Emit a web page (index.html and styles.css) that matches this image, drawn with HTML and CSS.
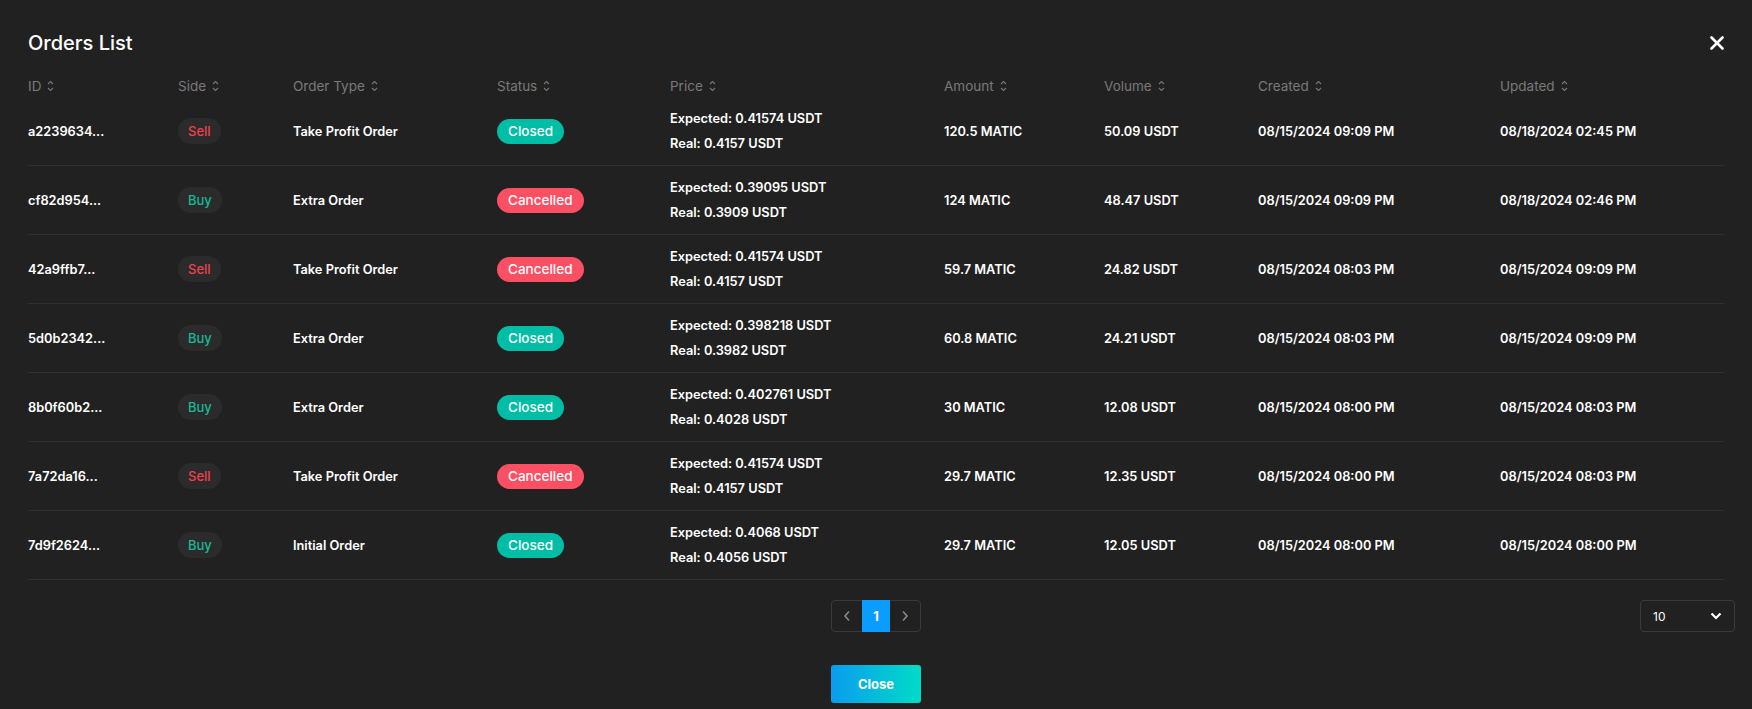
FILE: index.html
```html
<!DOCTYPE html>
<html lang="en">
<head>
  <meta charset="UTF-8" />
  <meta name="viewport" content="width=device-width, initial-scale=1.0"/>
  <title>Orders List</title>
  <link rel="stylesheet" href="styles.css">
</head>
<body>
  <div class="modal">
    <div class="modal-head">
      <h2>Orders List</h2>
      <button class="x-btn" aria-label="Close">
        <svg width="14" height="14" viewBox="0 0 14 14"><path d="M1.5 1.5 L12.5 12.5 M12.5 1.5 L1.5 12.5" stroke="#fff" stroke-width="2.6" stroke-linecap="round"/></svg>
      </button>
    </div>

    <div class="grid header-row">
      <span>ID <i class="sort"></i></span>
      <span>Side <i class="sort"></i></span>
      <span>Order Type <i class="sort"></i></span>
      <span>Status <i class="sort"></i></span>
      <span>Price <i class="sort"></i></span>
      <span>Amount <i class="sort"></i></span>
      <span>Volume <i class="sort"></i></span>
      <span>Created <i class="sort"></i></span>
      <span>Updated <i class="sort"></i></span>
    </div>

    <div id="rows"></div>

    <div class="footer">
      <div></div>
      <div class="pager">
        <span class="pg-arrow"><svg width="8" height="12" viewBox="0 0 8 12"><path d="M6 1.5 L2 6 L6 10.5" fill="none" stroke="#8a8a8a" stroke-width="1.6"/></svg></span>
        <span class="pg-num active">1</span>
        <span class="pg-arrow"><svg width="8" height="12" viewBox="0 0 8 12"><path d="M2 1.5 L6 6 L2 10.5" fill="none" stroke="#8a8a8a" stroke-width="1.6"/></svg></span>
      </div>
      <div class="page-size">
        <span>10</span>
        <svg width="12" height="8" viewBox="0 0 12 8"><path d="M1.5 1.5 L6 6 L10.5 1.5" fill="none" stroke="#fff" stroke-width="2.2"/></svg>
      </div>
    </div>

    <div class="actions">
      <button class="close-btn">Close</button>
    </div>
  </div>

  <script>
    const orders = [
      ['a2239634...', 'Sell', 'Take Profit Order', 'Closed', '0.41574', '0.4157', '120.5 MATIC', '50.09 USDT', '08/15/2024 09:09 PM', '08/18/2024 02:45 PM'],
      ['cf82d954...', 'Buy', 'Extra Order', 'Cancelled', '0.39095', '0.3909', '124 MATIC', '48.47 USDT', '08/15/2024 09:09 PM', '08/18/2024 02:46 PM'],
      ['42a9ffb7...', 'Sell', 'Take Profit Order', 'Cancelled', '0.41574', '0.4157', '59.7 MATIC', '24.82 USDT', '08/15/2024 08:03 PM', '08/15/2024 09:09 PM'],
      ['5d0b2342...', 'Buy', 'Extra Order', 'Closed', '0.398218', '0.3982', '60.8 MATIC', '24.21 USDT', '08/15/2024 08:03 PM', '08/15/2024 09:09 PM'],
      ['8b0f60b2...', 'Buy', 'Extra Order', 'Closed', '0.402761', '0.4028', '30 MATIC', '12.08 USDT', '08/15/2024 08:00 PM', '08/15/2024 08:03 PM'],
      ['7a72da16...', 'Sell', 'Take Profit Order', 'Cancelled', '0.41574', '0.4157', '29.7 MATIC', '12.35 USDT', '08/15/2024 08:00 PM', '08/15/2024 08:03 PM'],
      ['7d9f2624...', 'Buy', 'Initial Order', 'Closed', '0.4068', '0.4056', '29.7 MATIC', '12.05 USDT', '08/15/2024 08:00 PM', '08/15/2024 08:00 PM']
    ];

    const sortIcon = '<svg width="7" height="12" viewBox="0 0 7 12"><path d="M1 4 L3.5 1.5 L6 4 M1 8 L3.5 10.5 L6 8" fill="none" stroke="#777" stroke-width="1.1"/></svg>';
    document.querySelectorAll('.sort').forEach(el => el.innerHTML = sortIcon);

    const rows = document.getElementById('rows');
    orders.forEach(o => {
      const row = document.createElement('div');
      row.className = 'grid row';
      row.innerHTML = `
        <span>${o[0]}</span>
        <span><em class="side ${o[1].toLowerCase()}">${o[1]}</em></span>
        <span>${o[2]}</span>
        <span><em class="status ${o[3].toLowerCase()}">${o[3]}</em></span>
        <span class="price">Expected: ${o[4]} USDT<br>Real: ${o[5]} USDT</span>
        <span>${o[6]}</span>
        <span>${o[7]}</span>
        <span>${o[8]}</span>
        <span>${o[9]}</span>
      `;
      rows.appendChild(row);
    });
  </script>
</body>
</html>
```

FILE: styles.css
```css
body {
  margin: 0;
  background-color: #212121;
  font-family: Inter, "Open Sans", sans-serif;
  color: #fff;
}
.modal {
  padding: 28px 28px 6px;
}
.modal-head {
  display: flex;
  justify-content: space-between;
  align-items: center;
  height: 30px;
}
.modal-head h2 {
  margin: 0;
  font-size: 20px;
  font-weight: 500;
}
.x-btn {
  background: none;
  border: none;
  padding: 0;
  width: 14px;
  height: 14px;
  display: flex;
}
.grid {
  display: grid;
  grid-template-columns: 150px 115px 204px 173px 274px 160px 154px 242px 224px;
  align-items: center;
}
.header-row {
  margin-top: 16px;
  height: 23px;
  color: #7a7a7a;
  font-size: 13.5px;
}
.header-row span {
  display: flex;
  align-items: center;
  gap: 6px;
}
.sort {
  display: flex;
}
.row {
  height: 68px;
  border-bottom: 1px solid #303030;
  font-size: 12.8px;
  font-weight: 600;
}
.price {
  line-height: 25px;
}
.side, .status {
  display: inline-block;
  font-style: normal;
  font-weight: 500;
  border-radius: 13px;
}
.side {
  height: 26px;
  line-height: 26px;
  padding: 0 10px;
  font-size: 13px;
  background-color: #2b2b2b;
}
.side.sell {
  color: #f0414f;
}
.side.buy {
  color: #17b897;
}
.status {
  height: 25px;
  line-height: 25px;
  padding: 0 11px;
  font-size: 13.5px;
  color: #fff;
}
.status.closed {
  background-color: #00bea6;
}
.status.cancelled {
  background-color: #fb5063;
}
.footer {
  display: grid;
  grid-template-columns: 1fr auto 1fr;
  align-items: center;
  margin-top: 20px;
}
.pager {
  display: flex;
  height: 32px;
  border: 1px solid #3a3a3a;
  border-radius: 4px;
  box-sizing: border-box;
}
.pg-arrow {
  width: 30px;
  display: flex;
  align-items: center;
  justify-content: center;
}
.pg-num {
  width: 28px;
  margin: -1px 0;
  display: flex;
  align-items: center;
  justify-content: center;
  font-size: 13px;
  font-weight: 700;
}
.pg-num.active {
  background-color: #0a9dff;
}
.page-size {
  justify-self: end;
  margin-right: -11px;
  width: 95px;
  height: 32px;
  box-sizing: border-box;
  border: 1px solid #3a3a3a;
  border-radius: 4px;
  display: flex;
  align-items: center;
  justify-content: space-between;
  padding: 0 12px;
  font-size: 12px;
}
.actions {
  display: flex;
  justify-content: center;
  margin-top: 33px;
}
.close-btn {
  width: 90px;
  height: 38px;
  border: none;
  border-radius: 3px;
  background: linear-gradient(90deg, #0a9cf0, #00dcc6);
  color: #fff;
  font-family: inherit;
  font-size: 13px;
  font-weight: 700;
}
```
